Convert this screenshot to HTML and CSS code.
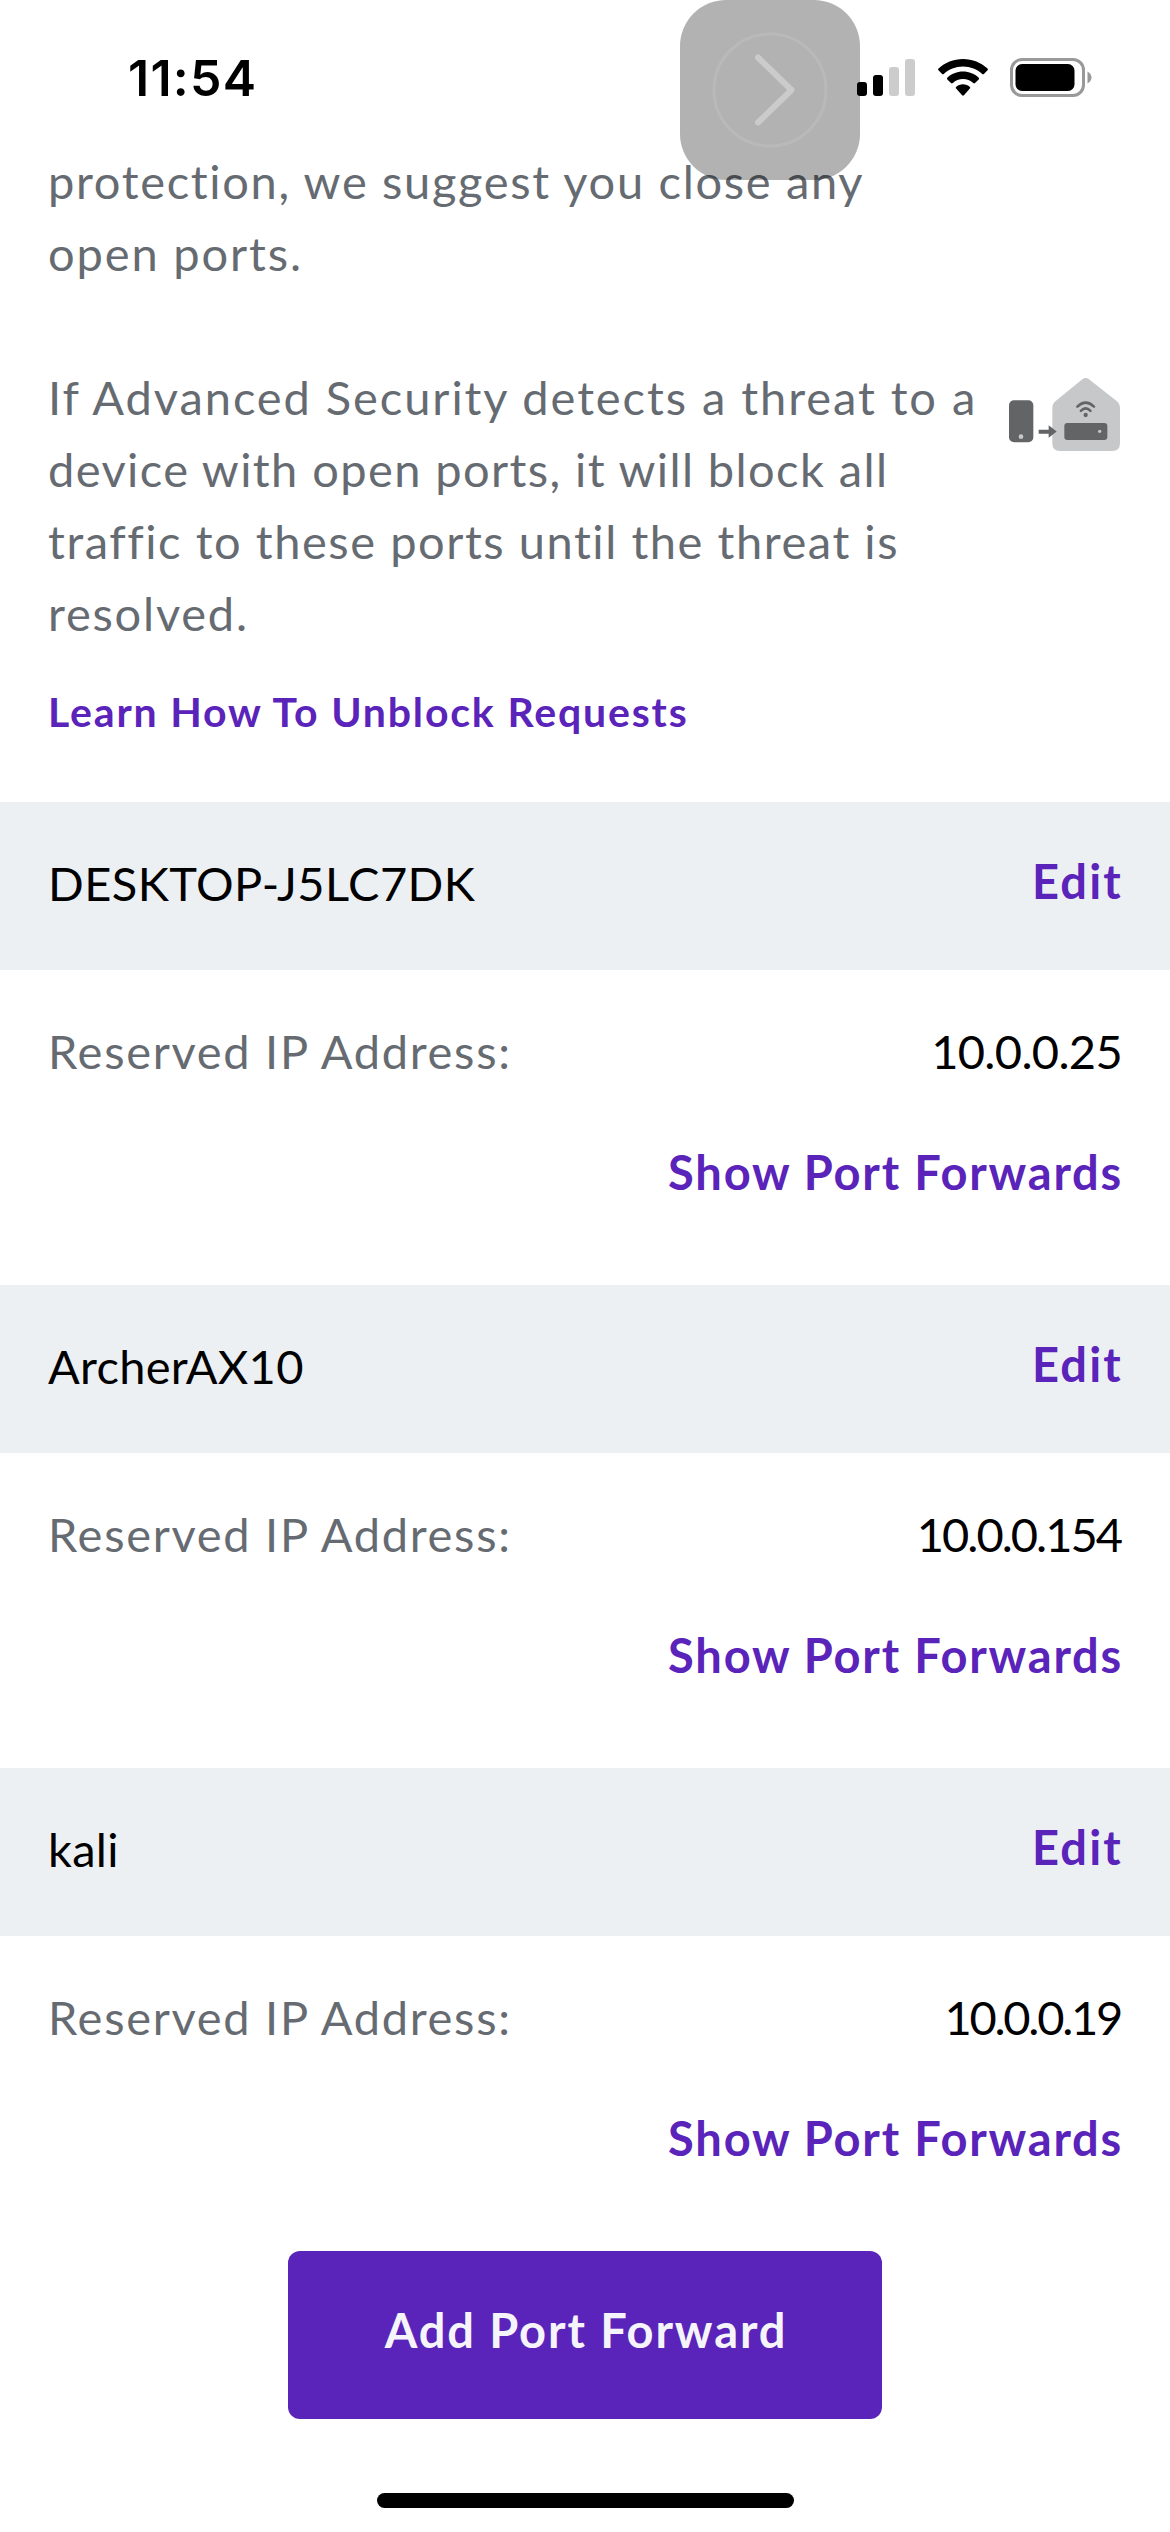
FILE: index.html
```html
<!DOCTYPE html>
<html lang="en">
<head>
<meta charset="utf-8">
<title>Port Forwarding</title>
<link rel="stylesheet" href="styles.css">
</head>
<body>
<div class="screen">
  <header class="status">
    <span class="time">11:54</span>
    <div class="indicators">
      <svg class="signal" width="58" height="37" viewBox="0 0 58 37">
        <rect x="0" y="23" width="10" height="14" rx="3"/>
        <rect x="16" y="16" width="10" height="21" rx="3"/>
        <rect x="32" y="8" width="10" height="29" rx="3" fill="#ccc"/>
        <rect x="48" y="0" width="10" height="37" rx="3" fill="#ccc"/>
      </svg>
      <svg class="wifi" width="50" height="37" viewBox="0 0 50 37">
        <path d="M25 0C34.500 0 43.100 3.700 49.500 9.600Q50.300 10.400 49.500 11.300L45.900 14.900Q45.100 15.600 44.200 14.900C39.200 10.300 32.400 7.500 25 7.500S10.800 10.300 5.800 14.900Q4.900 15.600 4.100 14.900L0.500 11.300Q-0.300 10.400 0.500 9.600C6.900 3.700 15.500 0 25 0Z"/>
        <path d="M25 12.500C31.100 12.500 36.600 14.800 40.700 18.700Q41.500 19.500 40.700 20.400L37 24.100Q36.200 24.900 35.200 24.100C32.500 21.600 28.900 20.100 25 20.100S17.500 21.600 14.800 24.100Q13.800 24.900 13 24.100L9.300 20.400Q8.500 19.500 9.300 18.700C13.400 14.800 18.900 12.500 25 12.500Z"/>
        <path d="M25 25.200C27.700 25.200 30.100 26.200 31.900 27.900Q32.700 28.700 31.900 29.600L25.900 36.300Q25 37.200 24.100 36.300L18.100 29.600Q17.300 28.700 18.100 27.900C19.900 26.200 22.300 25.200 25 25.200Z"/>
      </svg>
      <svg class="battery" width="82" height="39" viewBox="0 0 82 39">
        <rect x="1.500" y="1.500" width="72" height="36" rx="10.500" fill="none" stroke="#999" stroke-width="3"/>
        <rect x="5.500" y="6" width="59" height="27" rx="6.500"/>
        <path d="M77.500 13.500C80 14.800 81.500 17 81.500 19.500S80 24.200 77.500 25.500Z" fill="#999"/>
      </svg>
    </div>
  </header>

  <main>
    <section class="intro">
      <div class="copy">
        <p><span class="l1">protection, we suggest you close any</span><br><span class="l2">open ports.</span></p>
        <p><span class="l3">If Advanced Security detects a threat to a</span><br><span class="l4">device with open ports, it will block all</span><br><span class="l5">traffic to these ports until the threat is</span><br><span class="l6">resolved.</span></p>
        <a class="link learn">Learn How To Unblock Requests</a>
      </div>
      <svg class="home-icon" width="112" height="74" viewBox="0 0 336 222">
        <path d="M220 4Q230 -4 240 4L322 68Q333 77 333 90V196Q333 219 310 219H153Q130 219 130 196V90Q130 77 141 68Z" fill="#c7c8ca"/>
        <rect x="0" y="67" width="73" height="126" rx="15" fill="#636466"/>
        <circle cx="36" cy="176" r="7" fill="#c7c8ca"/>
        <path d="M89 155H119V142L143 160.500L119 179V167H89Z" fill="#636466"/>
        <rect x="166" y="135" width="129" height="51" rx="9" fill="#636466"/>
        <circle cx="272" cy="160" r="5" fill="#c7c8ca"/>
        <g fill="none" stroke="#636466" stroke-width="7.500" stroke-linecap="round">
          <path d="M205 86Q230 62 255 86"/>
          <path d="M215.500 98.500Q230 84 244.500 98.500"/>
        </g>
        <circle cx="230" cy="111" r="6.500" fill="#636466"/>
      </svg>
    </section>

    <section class="device">
      <div class="device-head"><span class="name desktop">DESKTOP-J5LC7DK</span><a class="link edit">Edit</a></div>
      <div class="row"><span class="label">Reserved IP Address:</span><span class="ip ip-a">10.0.0.25</span></div>
      <a class="link show">Show Port Forwards</a>
    </section>
    <section class="device">
      <div class="device-head"><span class="name">ArcherAX10</span><a class="link edit">Edit</a></div>
      <div class="row"><span class="label">Reserved IP Address:</span><span class="ip ip-b">10.0.0.154</span></div>
      <a class="link show">Show Port Forwards</a>
    </section>
    <section class="device">
      <div class="device-head"><span class="name">kali</span><a class="link edit">Edit</a></div>
      <div class="row"><span class="label">Reserved IP Address:</span><span class="ip ip-c">10.0.0.19</span></div>
      <a class="link show">Show Port Forwards</a>
    </section>
    <button class="add">Add Port Forward</button>
  </main>
  <div class="home-bar"></div>

  <div class="assist">
    <svg width="180" height="180" viewBox="0 0 180 180" fill="none">
      <circle cx="90" cy="90" r="56" stroke="#fff" stroke-opacity=".1" stroke-width="3"/>
      <path d="M78 57.500L111.500 90L78 122.500" stroke="#fff" stroke-opacity=".33" stroke-width="6" stroke-linecap="round" stroke-linejoin="round"/>
    </svg>
  </div>
</div>
</body>
</html>
```

FILE: styles.css
```css
* { box-sizing: border-box; }

body {
  margin: 0;
  background: #fff;
  color: #000;
  font-family: Lato, sans-serif;
  font-size: 47px;
  line-height: 72px;
}

.screen {
  position: relative;
  display: flex;
  flex-direction: column;
  width: 1170px;
  height: 2532px;
  overflow: hidden;
}

.status {
  display: flex;
  justify-content: space-between;
  height: 145px;
  padding: 58px 78px 0 128px;
}

.time {
  height: 39px;
  font: 600 50px/41px Inter, sans-serif;
  letter-spacing: 1.26px;
}

.indicators { display: flex; align-items: flex-start; }
.signal, .wifi { margin-top: 1px; }
.wifi { margin-left: 23px; }
.battery { margin-left: 22px; }

.intro {
  display: flex;
  justify-content: space-between;
  align-items: flex-start;
  height: 657px;
  padding: 0 49px 0 48px;
}

.copy { color: #666b72; white-space: nowrap; }
.copy p { margin: 0 0 72px; }
.copy p + p { margin-bottom: 29px; }
.home-icon { margin-top: 233px; }

.l1 { letter-spacing: 1.68px; }
.l2 { letter-spacing: 1.86px; }
.l3 { letter-spacing: 1.93px; }
.l4 { letter-spacing: 1.4px; }
.l5 { letter-spacing: 1.55px; }
.l6 { letter-spacing: 1.77px; }

.link { color: #5a23b9; font-weight: 700; }

.learn {
  display: block;
  font-size: 41px;
  line-height: 62px;
  padding-top: 3px;
  letter-spacing: 1.83px;
}

.device {
  display: flex;
  flex-direction: column;
  height: 483px;
}

.device-head {
  display: flex;
  justify-content: space-between;
  height: 168px;
  padding: 45px 48px 0;
  background: #ecf0f3;
}

.name { letter-spacing: 0.3px; }
.desktop { letter-spacing: 0.45px; }
.edit { margin: -2px -1px 0 0; letter-spacing: 2.2px; }

.row {
  display: flex;
  justify-content: space-between;
  padding: 45px 48px 49px;
}

.label { color: #666b72; letter-spacing: 1.7px; }
.ip-a { letter-spacing: -0.67px; }
.ip-b { letter-spacing: -1.98px; margin-right: 1px; }
.ip-c { letter-spacing: -2.26px; margin-right: 1px; }

.show {
  align-self: flex-end;
  margin-right: 47px;
  letter-spacing: 1.79px;
}

.add {
  display: block;
  width: 594px;
  height: 168px;
  margin: 0 auto;
  padding: 0 0 10px 2px;
  border: 0;
  border-radius: 12px;
  background: #5a23b9;
  color: #f6f4fb;
  font: 700 47px/72px Lato, sans-serif;
  letter-spacing: 1.9px;
}

.home-bar {
  width: 417px;
  height: 15px;
  margin: 74px auto 0;
  border-radius: 8px;
  background: #000;
}

.assist {
  position: absolute;
  left: 680px;
  top: 0;
  width: 180px;
  height: 180px;
  border-radius: 46px;
  background: rgba(0, 0, 0, 0.3);
}
.assist svg { display: block; }
```
